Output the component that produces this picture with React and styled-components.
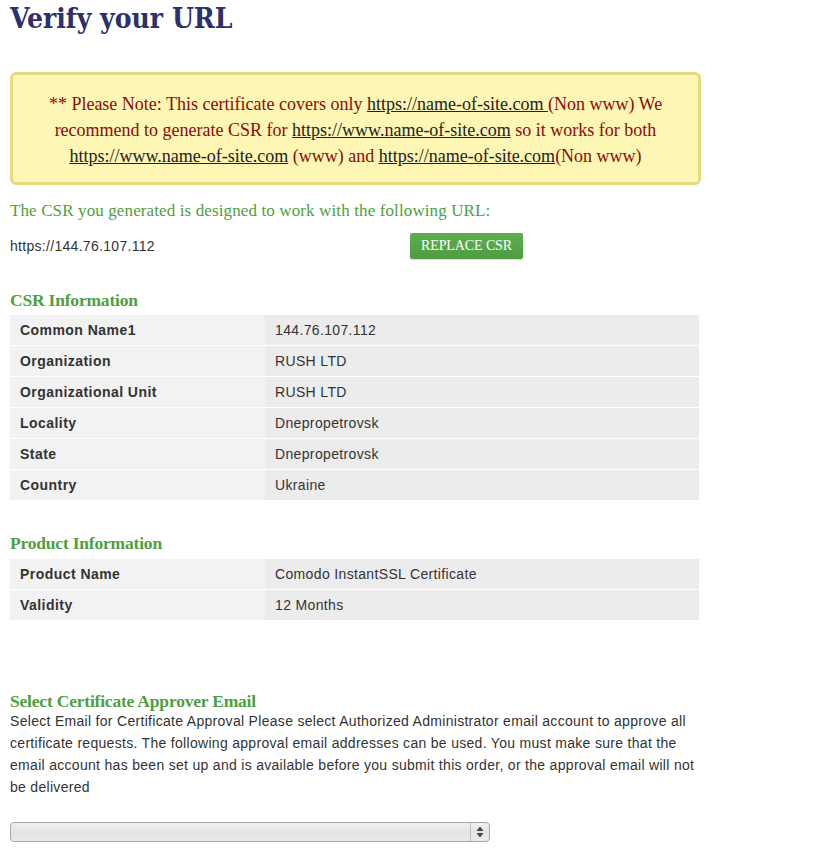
import React from "react";
import styled, { createGlobalStyle } from "styled-components";

const Global = createGlobalStyle`
  html, body { margin: 0; padding: 0; background: #fff; }
  body { font-family: "Liberation Sans", Arial, sans-serif; color: #333; }
`;

const Page = styled.div`
  width: 690px;
  padding: 0 10px;
`;

const Title = styled.h1`
  margin: 0;
  padding-top: 2px;
  font-family: "DejaVu Serif Condensed", "DejaVu Serif", serif;
  font-weight: bold;
  font-size: 28px;
  line-height: 34px;
  color: #2c306b;
`;

const Note = styled.div`
  margin-top: 36px;
  width: 691px;
  box-sizing: border-box;
  border: 3px solid #e6da80;
  border-radius: 6px;
  background: #fdf6b4;
  padding: 16px 8px 13px;
  text-align: center;
  font-family: "Liberation Serif", "DejaVu Serif", serif;
  font-size: 18px;
  line-height: 26px;
  color: #8a0b0b;
`;

const NoteLink = styled.a`
  color: #222;
  text-decoration: underline;
`;

const GreenHeading = styled.h2`
  margin: ${(p) => p.$top}px 0 0;
  font-family: "Liberation Serif", "DejaVu Serif", serif;
  font-weight: ${(p) => (p.$bold ? "bold" : "normal")};
  font-size: ${(p) => p.$size}px;
  line-height: ${(p) => p.$lh}px;
  color: #4f9e40;
  letter-spacing: ${(p) => (p.$bold ? "-0.2px" : "0.12px")};
`;

const UrlRow = styled.div`
  margin-top: 10px;
  display: flex;
  align-items: center;
  height: 26px;
`;

const UrlText = styled.div`
  width: 400px;
  font-size: 14px;
  letter-spacing: 0.3px;
  color: #333;
`;

const Button = styled.button`
  height: 26px;
  width: 113px;
  border: none;
  border-radius: 2px;
  background: linear-gradient(#5eae50, #4f9c42);
  box-shadow: 0 1px 1px rgba(0, 0, 0, 0.15);
  color: #fff;
  font-family: "Liberation Serif", "DejaVu Serif", serif;
  font-size: 14px;
  letter-spacing: -0.1px;
  padding: 0;
  cursor: pointer;
`;

const Table = styled.div`
  margin-top: ${(p) => p.$top}px;
  width: 689px;
`;

const Row = styled.div`
  display: grid;
  grid-template-columns: 255px 1fr;
  height: 30px;
  border-bottom: 1px solid #fff;
  font-size: 14px;
  line-height: 30px;
`;

const Label = styled.div`
  background: #f2f2f2;
  padding-left: 10px;
  font-weight: bold;
  letter-spacing: 0.45px;
  color: #333;
`;

const Value = styled.div`
  background: #ececec;
  padding-left: 10px;
  letter-spacing: 0.35px;
  color: #333;
`;

const Para = styled.p`
  margin: -1px 0 0;
  font-size: 14px;
  letter-spacing: 0.3px;
  line-height: 22px;
  color: #333;
`;

const SelectShell = styled.div`
  margin-top: 24px;
  width: 480px;
  height: 20px;
  box-sizing: border-box;
  display: flex;
  border: 1px solid #a8a8a8;
  border-radius: 4px;
  background: linear-gradient(#f0f0f0, #e4e4e4 50%, #e9e9e9);
  overflow: hidden;
`;

const SelectField = styled.select`
  flex: 1;
  appearance: none;
  -webkit-appearance: none;
  border: none;
  background: transparent;
  height: 18px;
  font-size: 12px;
  outline: none;
`;

const ArrowCell = styled.div`
  width: 18px;
  border-left: 1px solid #bdbdbd;
  display: flex;
  align-items: center;
  justify-content: center;
`;

const csr = [
  ["Common Name1", "144.76.107.112"],
  ["Organization", "RUSH LTD"],
  ["Organizational Unit", "RUSH LTD"],
  ["Locality", "Dnepropetrovsk"],
  ["State", "Dnepropetrovsk"],
  ["Country", "Ukraine"],
];

const product = [
  ["Product Name", "Comodo InstantSSL Certificate"],
  ["Validity", "12 Months"],
];

export default function App() {
  return (
    <Page>
      <Global />
      <Title>Verify your URL</Title>
      <Note>
        ** Please Note: This certificate covers only{" "}
        <NoteLink>https://name-of-site.com </NoteLink>(Non www) We
        <br />
        recommend to generate CSR for <NoteLink>https://www.name-of-site.com</NoteLink> so it works for both
        <br />
        <NoteLink>https://www.name-of-site.com</NoteLink> (www) and{" "}
        <NoteLink>https://name-of-site.com</NoteLink>(Non www)
      </Note>
      <GreenHeading $top={14} $size={17} $lh={24}>
        The CSR you generated is designed to work with the following URL:
      </GreenHeading>
      <UrlRow>
        <UrlText>https://144.76.107.112</UrlText>
        <Button>REPLACE CSR</Button>
      </UrlRow>
      <GreenHeading $top={30} $size={17.5} $lh={22} $bold>
        CSR Information
      </GreenHeading>
      <Table $top={4}>
        {csr.map(([k, v]) => (
          <Row key={k}>
            <Label>{k}</Label>
            <Value>{v}</Value>
          </Row>
        ))}
      </Table>
      <GreenHeading $top={31} $size={17.5} $lh={22} $bold>
        Product Information
      </GreenHeading>
      <Table $top={5}>
        {product.map(([k, v]) => (
          <Row key={k}>
            <Label>{k}</Label>
            <Value>{v}</Value>
          </Row>
        ))}
      </Table>
      <GreenHeading $top={70} $size={17.5} $lh={20} $bold>
        Select Certificate Approver Email
      </GreenHeading>
      <Para>
        Select Email for Certificate Approval Please select Authorized Administrator email account to approve all
        certificate requests. The following approval email addresses can be used. You must make sure that the
        email account has been set up and is available before you submit this order, or the approval email will not
        be delivered
      </Para>
      <SelectShell>
        <SelectField aria-label="Approver email">
          <option value=""></option>
        </SelectField>
        <ArrowCell>
          <svg width="8" height="12" viewBox="0 0 8 12">
            <path d="M4 0.5 L7.5 5 L0.5 5 Z" fill="#444" />
            <path d="M4 11.5 L7.5 7 L0.5 7 Z" fill="#444" />
          </svg>
        </ArrowCell>
      </SelectShell>
    </Page>
  );
}
